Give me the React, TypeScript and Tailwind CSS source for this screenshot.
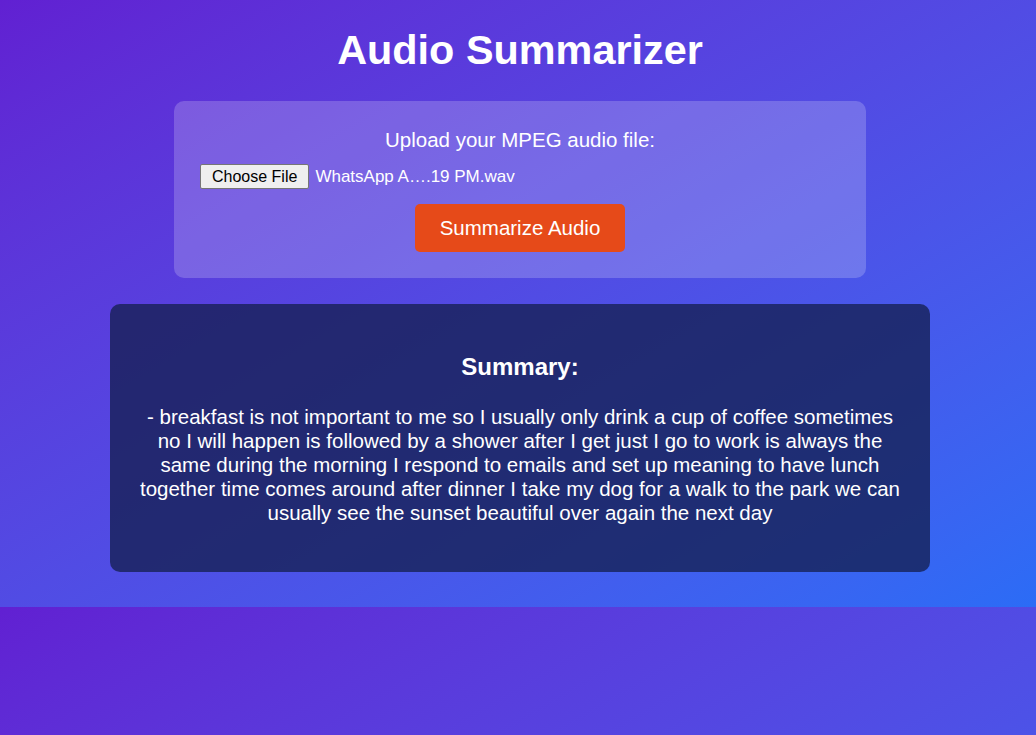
export default function App() {
  return (
    <div
      className="h-[735px] overflow-hidden bg-linear-to-br from-[#6120d2] to-[#2b6cf6] bg-[length:100%_607px] bg-repeat-y text-white"
      style={{ fontFamily: '"Liberation Sans", Arial, sans-serif' }}
    >
      <div className="h-[607px] pl-[4px] flex flex-col items-center">
        {/* Title */}
        <h1 className="mt-[27px] text-[41.4px] leading-[46px] font-bold">Audio Summarizer</h1>

        {/* Upload card */}
        <div className="mt-[28px] w-[692px] rounded-[10px] bg-white/20 px-[26px] pt-[27px] pb-[26px] flex flex-col items-center">
          <p className="text-[20.5px] leading-[24px]">Upload your MPEG audio file:</p>
          <div className="mt-[12px] self-stretch flex items-center gap-[6px]">
            <span className="h-[25px] px-[11px] flex items-center bg-[#efefef] border border-[#767676] rounded-[2px] text-black text-[16px] leading-none">
              Choose File
            </span>
            <span className="text-[17px] leading-none">WhatsApp A….19 PM.wav</span>
          </div>
          <button className="mt-[15px] h-[48px] px-[25px] rounded-[5px] bg-[#e64a19] text-[20.5px] leading-[24px] text-white">
            Summarize Audio
          </button>
        </div>

        {/* Summary card */}
        <div className="mt-[26px] w-[820px] rounded-[10px] bg-[#141e4e]/[0.76] px-[27px] pt-[49px] pb-[47px] text-center">
          <h3 className="text-[24px] leading-[28px] font-bold">Summary:</h3>
          <p className="mt-[24px] text-[20.5px] leading-[24px]">
            - breakfast is not important to me so I usually only drink a cup of coffee sometimes no I will happen is
            followed by a shower after I get just I go to work is always the same during the morning I respond to emails
            and set up meaning to have lunch together time comes around after dinner I take my dog for a walk to the
            park we can usually see the sunset beautiful over again the next day
          </p>
        </div>
      </div>
    </div>
  )
}
